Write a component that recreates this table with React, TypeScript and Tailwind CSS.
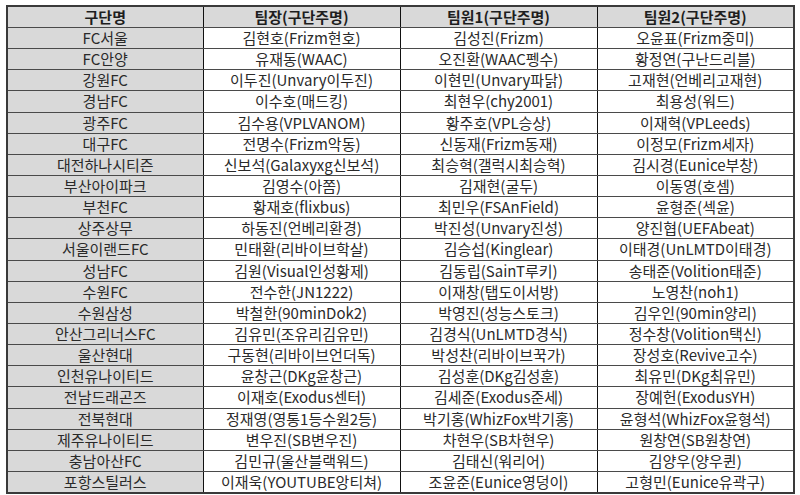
import React from "react";

interface TeamRow {
  club: string;
  leader: string;
  member1: string;
  member2: string;
}

const rows: TeamRow[] = [
  { club: "FC서울", leader: "김현호(Frizm현호)", member1: "김성진(Frizm)", member2: "오윤표(Frizm중미)" },
  { club: "FC안양", leader: "유재동(WAAC)", member1: "오진환(WAAC펭수)", member2: "황정연(구난드리블)" },
  { club: "강원FC", leader: "이두진(Unvary이두진)", member1: "이현민(Unvary파닭)", member2: "고재현(언베리고재현)" },
  { club: "경남FC", leader: "이수호(매드킹)", member1: "최현우(chy2001)", member2: "최용성(워드)" },
  { club: "광주FC", leader: "김수용(VPLVANOM)", member1: "황주호(VPL승상)", member2: "이재혁(VPLeeds)" },
  { club: "대구FC", leader: "전명수(Frizm악동)", member1: "신동재(Frizm동재)", member2: "이정모(Frizm세자)" },
  { club: "대전하나시티즌", leader: "신보석(Galaxyxg신보석)", member1: "최승혁(갤럭시최승혁)", member2: "김시경(Eunice부창)" },
  { club: "부산아이파크", leader: "김영수(아쫌)", member1: "김재현(굴두)", member2: "이동영(호셈)" },
  { club: "부천FC", leader: "황재호(flixbus)", member1: "최민우(FSAnField)", member2: "윤형준(섹윤)" },
  { club: "상주상무", leader: "하동진(언베리환경)", member1: "박진성(Unvary진성)", member2: "양진협(UEFAbeat)" },
  { club: "서울이랜드FC", leader: "민태환(리바이브학살)", member1: "김승섭(Kinglear)", member2: "이태경(UnLMTD이태경)" },
  { club: "성남FC", leader: "김원(Visual인성황제)", member1: "김동립(SainT루키)", member2: "송태준(Volition태준)" },
  { club: "수원FC", leader: "전수한(JN1222)", member1: "이재창(탭도이서방)", member2: "노영찬(noh1)" },
  { club: "수원삼성", leader: "박철한(90minDok2)", member1: "박영진(성능스토크)", member2: "김우인(90min양리)" },
  { club: "안산그리너스FC", leader: "김유민(조유리김유민)", member1: "김경식(UnLMTD경식)", member2: "정수창(Volition택신)" },
  { club: "울산현대", leader: "구동현(리바이브언더독)", member1: "박성찬(리바이브꾹가)", member2: "장성호(Revive고수)" },
  { club: "인천유나이티드", leader: "윤창근(DKg윤창근)", member1: "김성훈(DKg김성훈)", member2: "최유민(DKg최유민)" },
  { club: "전남드래곤즈", leader: "이재호(Exodus센터)", member1: "김세준(Exodus준세)", member2: "장예헌(ExodusYH)" },
  { club: "전북현대", leader: "정재영(영통1등수원2등)", member1: "박기홍(WhizFox박기홍)", member2: "윤형석(WhizFox윤형석)" },
  { club: "제주유나이티드", leader: "변우진(SB변우진)", member1: "차현우(SB차현우)", member2: "원창연(SB원창연)" },
  { club: "충남아산FC", leader: "김민규(울산블랙워드)", member1: "김태신(워리어)", member2: "김양우(양우퀸)" },
  { club: "포항스틸러스", leader: "이재욱(YOUTUBE앙티쳐)", member1: "조윤준(Eunice영덩이)", member2: "고형민(Eunice유곽구)" },
];

const cell =
  "h-[21.15px] p-0 text-center align-middle whitespace-nowrap border-y border-y-[#4a4a4a] border-x border-x-[#111]";

export default function App() {
  return (
    <div
      className="w-[800px] h-[495px] bg-white pl-[6px] pt-[5px] text-[15px] leading-[20px] text-[#2a2a2a]"
      style={{ fontFamily: '"Noto Sans CJK KR", "Noto Sans", sans-serif' }}
    >
      <table className="w-[787px] table-fixed border-collapse border-2 border-[#3a3a3a]">
        <colgroup>
          <col className="w-[196px]" />
          <col className="w-[197px]" />
          <col className="w-[197px]" />
          <col className="w-[197px]" />
        </colgroup>
        <thead>
          <tr className="bg-[#d9d9d9] font-bold text-[#1e1e1e]">
            <th className={cell}>구단명</th>
            <th className={cell}>팀장(구단주명)</th>
            <th className={cell}>팀원1(구단주명)</th>
            <th className={cell}>팀원2(구단주명)</th>
          </tr>
        </thead>
        <tbody>
          {rows.map(row => (
            <tr key={row.club}>
              <td className={`${cell} bg-[#d9d9d9]`}>{row.club}</td>
              <td className={cell}>{row.leader}</td>
              <td className={cell}>{row.member1}</td>
              <td className={cell}>{row.member2}</td>
            </tr>
          ))}
        </tbody>
      </table>
    </div>
  );
}
